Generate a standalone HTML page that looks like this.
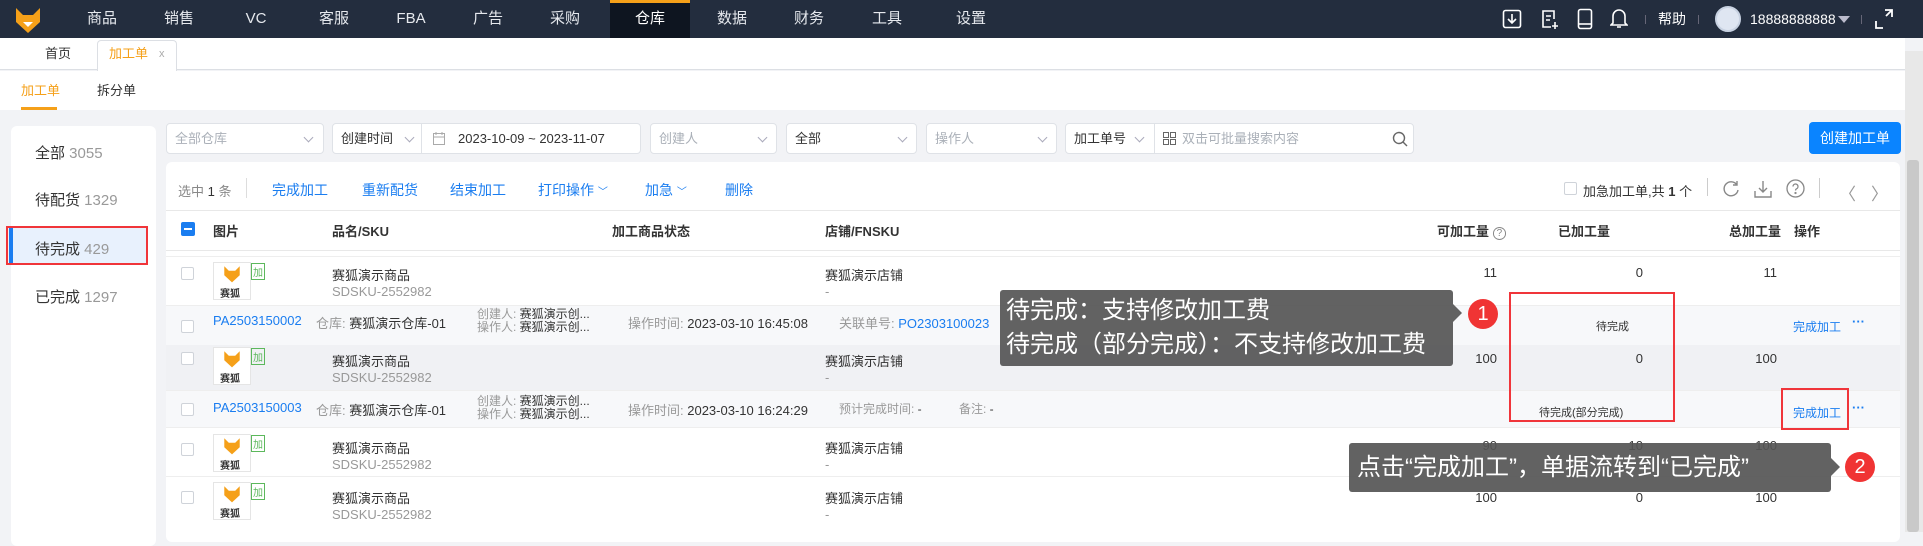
<!DOCTYPE html>
<html><head><meta charset="utf-8"><style>
*{margin:0;padding:0;box-sizing:border-box}
body{width:1923px;height:532px;overflow:hidden;background:#f2f3f6;font-family:"Liberation Sans","Noto Sans CJK SC",sans-serif;font-size:13px;color:#333;position:relative}
.a{position:absolute;white-space:nowrap}
.nav{left:0;top:0;width:1923px;height:38px;background:#232d3e}
.ni{top:0;height:38px;line-height:38px;color:#e6e9ee;font-size:15px;transform:translateX(-50%)}
.box{background:#fff;border:1px solid #dfe2e7;border-radius:4px;height:31px;top:123px}
.ph{color:#aab0b8;font-size:13px;line-height:29px}
.chev{width:7px;height:7px;border-right:1px solid #aab;border-bottom:1px solid #aab;transform:rotate(45deg)}
.blue{color:#1a7df0}
.cb{width:13px;height:13px;border:1px solid #cfd3d9;border-radius:2px;background:#fff}
.g{color:#999}
.num{text-align:right;width:60px}
.tip{background:rgba(85,85,85,.92);color:#fff;font-size:24px;border-radius:3px}
.circ{width:30px;height:30px;border-radius:50%;background:#f03434;color:#fff;font-size:20px;text-align:center;line-height:30px}
.rb{border:2px solid #f0353a}
.img{width:38px;height:38px;border:1px solid #e5e5e5;background:#fff}
</style></head><body>
<!-- nav -->
<div class="a nav"></div>
<svg class="a" style="left:14px;top:6px" width="28" height="28" viewBox="0 0 28 28"><path d="M2 2 L9 9 L19 9 L26 2 L26 16 L14 27 L2 16Z" fill="#f5a019"/><path d="M9 16 L14 21 L19 16Z" fill="#fff"/></svg>
<div class="a" style="left:610px;top:0;width:80px;height:38px;background:#0e1520;border-top:3px solid #f5a019"></div>
<div class="a ni" style="left:102px">商品</div><div class="a ni" style="left:179px">销售</div><div class="a ni" style="left:256px">VC</div><div class="a ni" style="left:334px">客服</div><div class="a ni" style="left:411px">FBA</div><div class="a ni" style="left:488px">广告</div><div class="a ni" style="left:565px">采购</div><div class="a ni" style="left:650px;color:#fff">仓库</div><div class="a ni" style="left:732px">数据</div><div class="a ni" style="left:809px">财务</div><div class="a ni" style="left:887px">工具</div><div class="a ni" style="left:971px">设置</div>
<svg class="a" style="left:1502px;top:9px" width="20" height="20" viewBox="0 0 20 20" fill="none" stroke="#fff" stroke-width="1.6"><rect x="1.5" y="1.5" width="17" height="17" rx="2"/><path d="M10 5v9M6 10l4 4 4-4"/></svg>
<svg class="a" style="left:1540px;top:9px" width="20" height="21" viewBox="0 0 20 21" fill="none" stroke="#fff" stroke-width="1.6"><path d="M14 10V2H3v16h8M6 7h5M6 11h4M15 13v7M12 17h6"/></svg>
<svg class="a" style="left:1577px;top:8px" width="16" height="22" viewBox="0 0 16 22" fill="none" stroke="#fff" stroke-width="1.6"><rect x="1.5" y="1.5" width="13" height="19" rx="2"/><path d="M2 16h12"/></svg>
<svg class="a" style="left:1610px;top:7px" width="18" height="22" viewBox="0 0 18 22" fill="none" stroke="#fff" stroke-width="1.6"><path d="M3 16V9a6 6 0 0 1 12 0v7l2 2H1zM7 20h4"/></svg>
<div class="a" style="left:1645px;top:15px;width:1px;height:9px;background:#667"></div>
<div class="a" style="left:1658px;top:0;line-height:38px;color:#fff;font-size:14px">帮助</div>
<div class="a" style="left:1698px;top:15px;width:1px;height:9px;background:#667"></div>
<div class="a" style="left:1715px;top:6px;width:26px;height:26px;border-radius:50%;background:#dfe6f2;border:2px solid #c8d2e2"></div>
<div class="a" style="left:1750px;top:0;line-height:38px;color:#fff;font-size:14px">18888888888</div>
<div class="a" style="left:1838px;top:16px;border-left:6px solid transparent;border-right:6px solid transparent;border-top:7px solid #bbc"></div>
<div class="a" style="left:1861px;top:15px;width:1px;height:9px;background:#667"></div>
<svg class="a" style="left:1875px;top:9px" width="18" height="20" viewBox="0 0 18 20" fill="none" stroke="#fff" stroke-width="1.8"><path d="M1 12v7h7M10 1h7v7M17 1l-6 6"/></svg>
<!-- tabs -->
<div class="a" style="left:0;top:38px;width:1905px;height:32px;background:#fff;border-bottom:1px solid #dcdfe4"></div>
<div class="a" style="left:45px;top:38px;line-height:32px;font-size:13px">首页</div>
<div class="a" style="left:97px;top:40px;width:80px;height:31px;background:#fff;border:1px solid #dcdfe4;border-bottom:none;border-radius:4px 4px 0 0"></div>
<div class="a" style="left:109px;top:38px;line-height:32px;color:#f5a019">加工单</div>
<div class="a" style="left:159px;top:38px;line-height:32px;color:#aaa;font-size:11px">x</div>
<div class="a" style="left:0;top:71px;width:1905px;height:39px;background:#fff"></div>
<div class="a" style="left:21px;top:80px;color:#f5a019">加工单</div>
<div class="a" style="left:21px;top:107px;width:36px;height:3px;background:#f5a019"></div>
<div class="a" style="left:97px;top:80px">拆分单</div>
<div class="a" style="left:1905px;top:51px;width:18px;height:481px;background:#e8e8e8"></div>
<div class="a" style="left:1907px;top:160px;width:12px;height:372px;background:#c9c9c9;border-radius:3px"></div>
<!-- sidebar -->
<div class="a" style="left:11px;top:126px;width:145px;height:420px;background:#fff;border-radius:6px"></div>
<div class="a" style="left:35px;top:142px;font-size:15px">全部 <span class="g">3055</span></div>
<div class="a" style="left:35px;top:189px;font-size:15px">待配货 <span class="g">1329</span></div>
<div class="a" style="left:9px;top:228px;width:138px;height:35px;background:#e8f1fd;border-left:4px solid #1a7df0"></div>
<div class="a" style="left:35px;top:238px;font-size:15px">待完成 <span class="g">429</span></div>
<div class="a rb" style="left:6px;top:226px;width:142px;height:39px"></div>
<div class="a" style="left:35px;top:286px;font-size:15px">已完成 <span class="g">1297</span></div>
<!-- filters -->
<div class="a box" style="left:166px;width:158px"><span class="a ph" style="left:8px">全部仓库</span><span class="a chev" style="left:138px;top:10px"></span></div>
<div class="a box" style="left:332px;width:309px"><span class="a" style="left:8px;line-height:29px">创建时间</span><span class="a chev" style="left:73px;top:10px"></span><span class="a" style="left:88px;top:0;width:1px;height:29px;background:#dfe2e7"></span>
<svg class="a" style="left:100px;top:8px" width="12" height="13" viewBox="0 0 12 13" fill="none" stroke="#aaa"><rect x=".5" y="1.5" width="11" height="11"/><path d="M.5 5h11M3 0v3M9 0v3"/></svg><span class="a" style="left:125px;line-height:29px">2023-10-09 ~ 2023-11-07</span></div>
<div class="a box" style="left:650px;width:127px"><span class="a ph" style="left:8px">创建人</span><span class="a chev" style="left:108px;top:10px"></span></div>
<div class="a box" style="left:786px;width:131px"><span class="a" style="left:8px;line-height:29px">全部</span><span class="a chev" style="left:112px;top:10px"></span></div>
<div class="a box" style="left:926px;width:131px"><span class="a ph" style="left:8px">操作人</span><span class="a chev" style="left:112px;top:10px"></span></div>
<div class="a box" style="left:1065px;width:349px"><span class="a" style="left:8px;line-height:29px">加工单号</span><span class="a chev" style="left:70px;top:10px"></span><span class="a" style="left:88px;top:0;width:1px;height:29px;background:#dfe2e7"></span>
<svg class="a" style="left:97px;top:8px" width="13" height="13" viewBox="0 0 13 13" fill="none" stroke="#666"><rect x=".5" y=".5" width="5" height="5"/><rect x="7.5" y=".5" width="5" height="5"/><rect x=".5" y="7.5" width="5" height="5"/><rect x="7.5" y="7.5" width="5" height="5"/></svg><span class="a ph" style="left:116px">双击可批量搜索内容</span>
<svg class="a" style="left:326px;top:7px" width="16" height="16" viewBox="0 0 16 16" fill="none" stroke="#666" stroke-width="1.4"><circle cx="7" cy="7" r="5.5"/><path d="M11 11l4 4"/></svg></div>
<div class="a" style="left:1809px;top:122px;width:92px;height:32px;background:#0a84ff;border-radius:4px;color:#fff;line-height:32px;text-align:center;font-size:14px">创建加工单</div>
<!-- table card -->
<div class="a" style="left:166px;top:162px;width:1734px;height:380px;background:#fff;border-radius:6px"></div>
<div class="a" style="left:178px;top:181px;color:#888">选中 <span style="color:#333">1</span> 条</div>
<div class="a" style="left:246px;top:178px;width:1px;height:20px;background:#ddd"></div>
<div class="a blue" style="left:272px;top:180px;font-size:14px">完成加工</div>
<div class="a blue" style="left:362px;top:180px;font-size:14px">重新配货</div>
<div class="a blue" style="left:450px;top:180px;font-size:14px">结束加工</div>
<div class="a blue" style="left:538px;top:180px;font-size:14px">打印操作 <span style="font-size:10px">﹀</span></div>
<div class="a blue" style="left:645px;top:180px;font-size:14px">加急 <span style="font-size:10px">﹀</span></div>
<div class="a blue" style="left:725px;top:180px;font-size:14px">删除</div>
<div class="a cb" style="left:1564px;top:182px"></div>
<div class="a" style="left:1583px;top:181px">加急加工单,共 <b>1</b> 个</div>
<div class="a" style="left:1707px;top:178px;width:1px;height:18px;background:#ccc"></div>
<svg class="a" style="left:1722px;top:180px" width="18" height="18" viewBox="0 0 18 18" fill="none" stroke="#888" stroke-width="1.4"><path d="M15 5A7 7 0 1 0 16 10M15 1v4h-4"/></svg>
<svg class="a" style="left:1754px;top:180px" width="18" height="18" viewBox="0 0 18 18" fill="none" stroke="#888" stroke-width="1.4"><path d="M9 1v11M5 8l4 4 4-4M1 11v6h16v-6"/></svg>
<svg class="a" style="left:1786px;top:179px" width="19" height="19" viewBox="0 0 19 19" fill="none" stroke="#888" stroke-width="1.3"><circle cx="9.5" cy="9.5" r="8.5"/><path d="M7 7.5a2.5 2.5 0 1 1 3.5 2.3c-.8.4-1 .9-1 1.7"/><circle cx="9.5" cy="14" r=".5"/></svg>
<div class="a" style="left:1819px;top:178px;width:1px;height:20px;background:#ccc"></div>
<div class="a" style="left:1839px;top:180px;color:#999;font-size:17px">〈</div>
<div class="a" style="left:1871px;top:180px;color:#999;font-size:17px">〉</div>
<div class="a" style="left:166px;top:210px;width:1734px;height:1px;background:#e8e8e8"></div>
<!-- header -->
<div class="a" style="left:181px;top:222px;width:14px;height:14px;background:#1a7df0;border-radius:2px"><div style="margin:6px 3px;height:2px;background:#fff"></div></div>
<div class="a" style="left:213px;top:221px;font-weight:bold">图片</div>
<div class="a" style="left:332px;top:221px;font-weight:bold">品名/SKU</div>
<div class="a" style="left:612px;top:221px;font-weight:bold">加工商品状态</div>
<div class="a" style="left:825px;top:221px;font-weight:bold">店铺/FNSKU</div>
<div class="a" style="left:1437px;top:221px;font-weight:bold">可加工量 <span style="font-weight:normal;color:#888;border:1px solid #888;border-radius:50%;font-size:10px;padding:0 3px">?</span></div>
<div class="a" style="left:1558px;top:221px;font-weight:bold">已加工量</div>
<div class="a" style="left:1729px;top:221px;font-weight:bold">总加工量</div>
<div class="a" style="left:1794px;top:221px;font-weight:bold">操作</div>
<div class="a" style="left:166px;top:250px;width:1734px;height:1px;background:#e8e8e8"></div>
<div class="a" style="left:166px;top:256px;width:1734px;height:1px;background:#eee"></div>
<!-- rows -->
<div class="a" style="left:166px;top:305px;width:1734px;height:40px;background:#f7f8fa;border-top:1px solid #eee"></div>
<div class="a" style="left:166px;top:345px;width:1734px;height:45px;background:#f0f1f4"></div>
<div class="a" style="left:166px;top:390px;width:1734px;height:38px;background:#f7f8fa;border-top:1px solid #eee;border-bottom:1px solid #eee"></div>
<div class="a" style="left:166px;top:476px;width:1734px;height:1px;background:#eee"></div>
<!-- product rows -->
<div class="a cb" style="left:181px;top:267px"></div>
<div class="a img" style="left:213px;top:262px"></div><svg class="a" style="left:222px;top:265px" width="20" height="18" viewBox="0 0 28 28"><path d="M2 2 L9 9 L19 9 L26 2 L26 16 L14 27 L2 16Z" fill="#f5a019"/></svg><div class="a" style="left:220px;top:285px;font-size:10px;font-weight:bold">赛狐</div>
<div class="a" style="left:251px;top:263px;border:1px solid #5cb85c;color:#5cb85c;font-size:10px;padding:0 1px">加</div>
<div class="a" style="left:332px;top:265px">赛狐演示商品</div><div class="a g" style="left:332px;top:284px">SDSKU-2552982</div>
<div class="a" style="left:825px;top:265px">赛狐演示店铺</div><div class="a g" style="left:825px;top:284px">-</div>
<div class="a num" style="left:1437px;top:265px">11</div><div class="a num" style="left:1583px;top:265px">0</div><div class="a num" style="left:1717px;top:265px">11</div>

<div class="a cb" style="left:181px;top:320px"></div>
<div class="a blue" style="left:213px;top:313px">PA2503150002</div>
<div class="a" style="left:316px;top:313px"><span class="g">仓库:</span> 赛狐演示仓库-01</div>
<div class="a" style="left:477px;top:308px;font-size:12px;line-height:13px"><span class="g">创建人:</span> 赛狐演示创...<br><span class="g">操作人:</span> 赛狐演示创...</div>
<div class="a" style="left:628px;top:313px"><span class="g">操作时间:</span> 2023-03-10 16:45:08</div>
<div class="a" style="left:839px;top:313px"><span class="g">关联单号:</span> <span class="blue">PO2303100023</span></div>
<div class="a" style="left:1596px;top:318px;font-size:11px">待完成</div>
<div class="a blue" style="left:1793px;top:318px;font-size:12px">完成加工</div><div class="a blue" style="left:1852px;top:314px;font-weight:bold">···</div>

<div class="a cb" style="left:181px;top:352px"></div>
<div class="a img" style="left:213px;top:347px"></div><svg class="a" style="left:222px;top:350px" width="20" height="18" viewBox="0 0 28 28"><path d="M2 2 L9 9 L19 9 L26 2 L26 16 L14 27 L2 16Z" fill="#f5a019"/></svg><div class="a" style="left:220px;top:370px;font-size:10px;font-weight:bold">赛狐</div>
<div class="a" style="left:251px;top:348px;border:1px solid #5cb85c;color:#5cb85c;font-size:10px;padding:0 1px">加</div>
<div class="a" style="left:332px;top:351px">赛狐演示商品</div><div class="a g" style="left:332px;top:370px">SDSKU-2552982</div>
<div class="a" style="left:825px;top:351px">赛狐演示店铺</div><div class="a g" style="left:825px;top:370px">-</div>
<div class="a num" style="left:1437px;top:351px">100</div><div class="a num" style="left:1583px;top:351px">0</div><div class="a num" style="left:1717px;top:351px">100</div>

<div class="a cb" style="left:181px;top:403px"></div>
<div class="a blue" style="left:213px;top:400px">PA2503150003</div>
<div class="a" style="left:316px;top:400px"><span class="g">仓库:</span> 赛狐演示仓库-01</div>
<div class="a" style="left:477px;top:395px;font-size:12px;line-height:13px"><span class="g">创建人:</span> 赛狐演示创...<br><span class="g">操作人:</span> 赛狐演示创...</div>
<div class="a" style="left:628px;top:400px"><span class="g">操作时间:</span> 2023-03-10 16:24:29</div>
<div class="a" style="left:839px;top:400px;font-size:12px"><span class="g">预计完成时间:</span> -</div>
<div class="a" style="left:959px;top:400px;font-size:12px"><span class="g">备注:</span> -</div>
<div class="a" style="left:1539px;top:404px;font-size:11px">待完成(部分完成)</div>
<div class="a blue" style="left:1793px;top:404px;font-size:12px">完成加工</div><div class="a blue" style="left:1852px;top:400px;font-weight:bold">···</div>

<div class="a cb" style="left:181px;top:443px"></div>
<div class="a img" style="left:213px;top:434px"></div><svg class="a" style="left:222px;top:437px" width="20" height="18" viewBox="0 0 28 28"><path d="M2 2 L9 9 L19 9 L26 2 L26 16 L14 27 L2 16Z" fill="#f5a019"/></svg><div class="a" style="left:220px;top:457px;font-size:10px;font-weight:bold">赛狐</div>
<div class="a" style="left:251px;top:435px;border:1px solid #5cb85c;color:#5cb85c;font-size:10px;padding:0 1px">加</div>
<div class="a" style="left:332px;top:438px">赛狐演示商品</div><div class="a g" style="left:332px;top:457px">SDSKU-2552982</div>
<div class="a" style="left:825px;top:438px">赛狐演示店铺</div><div class="a g" style="left:825px;top:457px">-</div>
<div class="a num" style="left:1437px;top:438px">90</div><div class="a num" style="left:1583px;top:438px">10</div><div class="a num" style="left:1717px;top:438px">100</div>

<div class="a cb" style="left:181px;top:491px"></div>
<div class="a img" style="left:213px;top:482px"></div><svg class="a" style="left:222px;top:485px" width="20" height="18" viewBox="0 0 28 28"><path d="M2 2 L9 9 L19 9 L26 2 L26 16 L14 27 L2 16Z" fill="#f5a019"/></svg><div class="a" style="left:220px;top:505px;font-size:10px;font-weight:bold">赛狐</div>
<div class="a" style="left:251px;top:483px;border:1px solid #5cb85c;color:#5cb85c;font-size:10px;padding:0 1px">加</div>
<div class="a" style="left:332px;top:488px">赛狐演示商品</div><div class="a g" style="left:332px;top:507px">SDSKU-2552982</div>
<div class="a" style="left:825px;top:488px">赛狐演示店铺</div><div class="a g" style="left:825px;top:507px">-</div>
<div class="a num" style="left:1437px;top:490px">100</div><div class="a num" style="left:1583px;top:490px">0</div><div class="a num" style="left:1717px;top:490px">100</div>
<!-- annotations -->
<div class="a tip" style="left:1000px;top:290px;width:453px;height:76px;padding:4px 6px;line-height:34px">待完成：支持修改加工费<br>待完成（部分完成）：不支持修改加工费</div>
<div class="a" style="left:1453px;top:304px;border-top:9px solid transparent;border-bottom:9px solid transparent;border-left:9px solid rgba(85,85,85,.92)"></div>
<div class="a circ" style="left:1468px;top:299px">1</div>
<div class="a rb" style="left:1509px;top:292px;width:166px;height:130px"></div>
<div class="a rb" style="left:1781px;top:388px;width:68px;height:42px"></div>
<div class="a tip" style="left:1349px;top:443px;width:482px;height:49px;padding:0 8px;line-height:49px">点击“完成加工”，单据流转到“已完成”</div>
<div class="a" style="left:1831px;top:458px;border-top:9px solid transparent;border-bottom:9px solid transparent;border-left:9px solid rgba(85,85,85,.92)"></div>
<div class="a circ" style="left:1845px;top:452px">2</div>
</body></html>
